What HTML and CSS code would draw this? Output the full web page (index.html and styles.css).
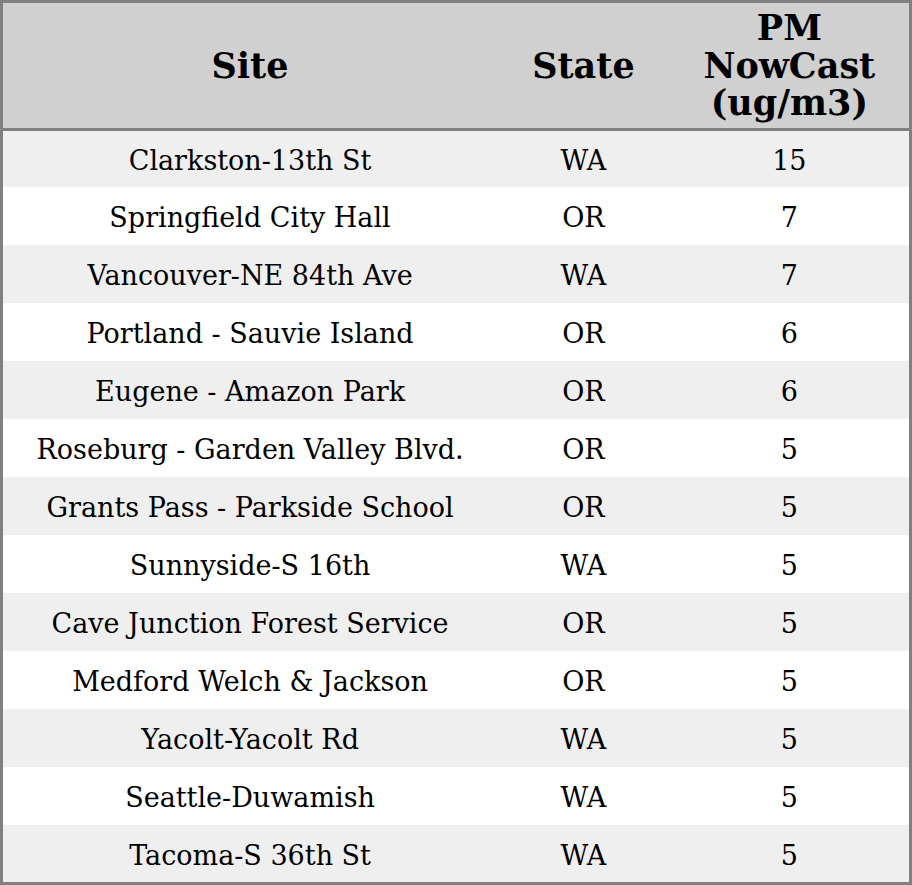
FILE: index.html
```html
<!DOCTYPE html>
<html>
<head>
<meta charset="utf-8">
<link rel="stylesheet" href="styles.css">
</head>
<body>
<table class="aq">
  <colgroup>
    <col class="c-site">
    <col class="c-state">
    <col class="c-pm">
  </colgroup>
  <thead>
    <tr><th>Site</th><th>State</th><th>PM<br>NowCast<br>(ug/m3)</th></tr>
  </thead>
  <tbody>
    <tr><td>Clarkston-13th St</td><td>WA</td><td>15</td></tr>
    <tr><td>Springfield City Hall</td><td>OR</td><td>7</td></tr>
    <tr><td>Vancouver-NE 84th Ave</td><td>WA</td><td>7</td></tr>
    <tr><td>Portland - Sauvie Island</td><td>OR</td><td>6</td></tr>
    <tr><td>Eugene - Amazon Park</td><td>OR</td><td>6</td></tr>
    <tr><td>Roseburg - Garden Valley Blvd.</td><td>OR</td><td>5</td></tr>
    <tr><td>Grants Pass - Parkside School</td><td>OR</td><td>5</td></tr>
    <tr><td>Sunnyside-S 16th</td><td>WA</td><td>5</td></tr>
    <tr><td>Cave Junction Forest Service</td><td>OR</td><td>5</td></tr>
    <tr><td>Medford Welch &amp; Jackson</td><td>OR</td><td>5</td></tr>
    <tr><td>Yacolt-Yacolt Rd</td><td>WA</td><td>5</td></tr>
    <tr><td>Seattle-Duwamish</td><td>WA</td><td>5</td></tr>
    <tr><td>Tacoma-S 36th St</td><td>WA</td><td>5</td></tr>
  </tbody>
</table>
</body>
</html>
```
FILE: styles.css
```css
html, body {
  margin: 0;
  padding: 0;
  background: #ffffff;
}
.aq {
  width: 912px;
  border-collapse: collapse;
  table-layout: fixed;
  border: 3px solid #808080;
  font-family: "DejaVu Serif", serif;
  color: #000;
}
.c-site { width: 494px; }
.c-state { width: 172px; }
.c-pm { width: 240px; }
.aq th {
  background: #d0d0d0;
  font-size: 35px;
  font-weight: bold;
  line-height: 37.5px;
  height: 125px;
  padding: 0;
  text-align: center;
  vertical-align: middle;
  border-bottom: 3px solid #808080;
}
.aq td {
  font-size: 27px;
  line-height: 30px;
  height: 54px;
  padding: 4px 0 0;
  text-align: center;
  vertical-align: middle;
}
.aq tbody tr:first-child td { height: 52px; }
.aq tbody tr:last-child td { height: 53px; }
.aq tbody tr:nth-child(odd) td { background: #efefef; }
.aq tbody tr:nth-child(even) td { background: #ffffff; }
```
